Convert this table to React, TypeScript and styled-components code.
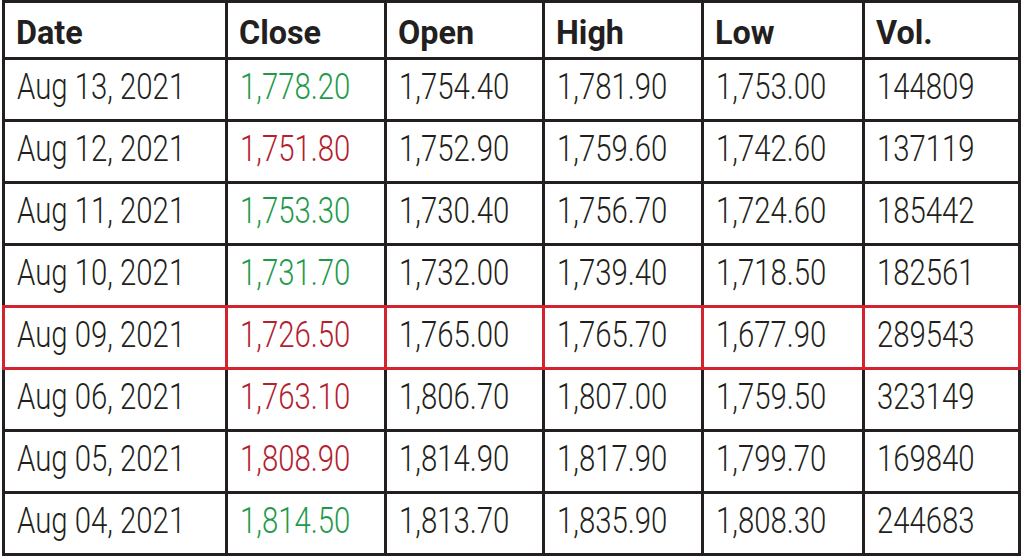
import styled, { createGlobalStyle } from 'styled-components';

type Trend = 'up' | 'down';

interface PriceRow {
  date: string;
  close: string;
  trend: Trend;
  open: string;
  high: string;
  low: string;
  vol: string;
  marked?: boolean;
}

const rows: PriceRow[] = [
  { date: 'Aug 13, 2021', close: '1,778.20', trend: 'up', open: '1,754.40', high: '1,781.90', low: '1,753.00', vol: '144809' },
  { date: 'Aug 12, 2021', close: '1,751.80', trend: 'down', open: '1,752.90', high: '1,759.60', low: '1,742.60', vol: '137119' },
  { date: 'Aug 11, 2021', close: '1,753.30', trend: 'up', open: '1,730.40', high: '1,756.70', low: '1,724.60', vol: '185442' },
  { date: 'Aug 10, 2021', close: '1,731.70', trend: 'up', open: '1,732.00', high: '1,739.40', low: '1,718.50', vol: '182561' },
  { date: 'Aug 09, 2021', close: '1,726.50', trend: 'down', open: '1,765.00', high: '1,765.70', low: '1,677.90', vol: '289543', marked: true },
  { date: 'Aug 06, 2021', close: '1,763.10', trend: 'down', open: '1,806.70', high: '1,807.00', low: '1,759.50', vol: '323149' },
  { date: 'Aug 05, 2021', close: '1,808.90', trend: 'down', open: '1,814.90', high: '1,817.90', low: '1,799.70', vol: '169840' },
  { date: 'Aug 04, 2021', close: '1,814.50', trend: 'up', open: '1,813.70', high: '1,835.90', low: '1,808.30', vol: '244683' },
];

const headers = ['Date', 'Close', 'Open', 'High', 'Low', 'Vol.'];

const GlobalStyle = createGlobalStyle`
  html, body {
    margin: 0;
    padding: 0;
    background: #ffffff;
  }
`;

const Page = styled.div`
  padding: 0 3px 0 2px;
  font-family: Roboto, 'DejaVu Sans Condensed', sans-serif;
`;

const Grid = styled.div`
  display: grid;
  grid-template-columns: 220px 156px 155px 156px 158px 153px;
  grid-template-rows: 54px repeat(8, 59px);
  gap: 3px;
  padding: 3px;
  width: max-content;
  background: #231f20;
`;

const HeadCell = styled.div`
  display: flex;
  align-items: center;
  padding: 4px 0 0 11px;
  background: #ffffff;
  color: #231f20;
  font-size: 33px;
  font-weight: 700;
`;

const Cell = styled.div<{ $marked?: boolean; $trend?: Trend }>`
  display: flex;
  align-items: center;
  padding: 0 0 6px 12px;
  background: #ffffff;
  font-size: 36px;
  font-weight: 300;
  color: ${({ $trend }) =>
    $trend === 'up' ? '#1f9a4c' : $trend === 'down' ? '#b3212f' : '#231f20'};
  ${({ $marked }) => $marked && 'outline: 3px solid #d2232f;'}
`;

// narrow the face to match the condensed type of the print table
const Squeeze = styled.span<{ $x: number }>`
  display: inline-block;
  white-space: nowrap;
  transform: scaleX(${({ $x }) => $x});
  transform-origin: left center;
`;

export default function App() {
  return (
    <>
      <GlobalStyle />
      <Page>
        <Grid>
          {headers.map((h) => (
            <HeadCell key={h}>
              <Squeeze $x={0.98}>{h}</Squeeze>
            </HeadCell>
          ))}
          {rows.map((r) => (
            <Row key={r.date} row={r} />
          ))}
        </Grid>
      </Page>
    </>
  );
}

function Row({ row }: { row: PriceRow }) {
  const cells = [row.date, row.close, row.open, row.high, row.low, row.vol];
  return (
    <>
      {cells.map((text, i) => (
        <Cell key={i} $marked={row.marked} $trend={i === 1 ? row.trend : undefined}>
          <Squeeze $x={0.815}>{text}</Squeeze>
        </Cell>
      ))}
    </>
  );
}
